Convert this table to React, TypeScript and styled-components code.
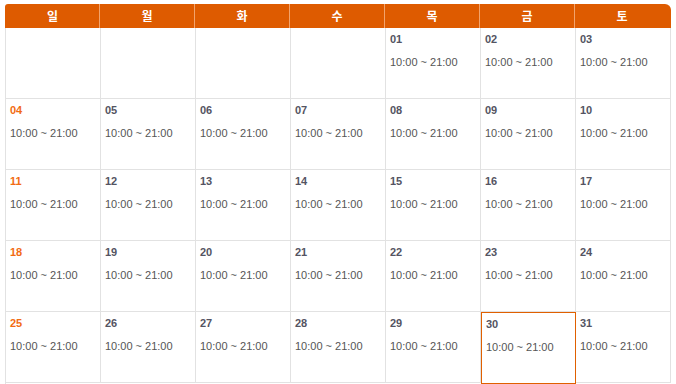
import React from "react";
import styled, { createGlobalStyle } from "styled-components";

const Global = createGlobalStyle`
  html, body { margin: 0; padding: 0; background: #fff; }
  body { font-family: "Liberation Sans", Arial, "Noto Sans CJK KR", sans-serif; }
`;

const Wrap = styled.div`
  padding: 4px 0 0 5px;
  width: 666px;
`;

const Header = styled.div`
  display: grid;
  grid-template-columns: repeat(7, 95px);
  height: 24px;
  width: 666px;
  background: #de5b00;
  border-radius: 3px 6px 0 0;
`;

const HeadCell = styled.div<{ $last?: boolean }>`
  display: flex;
  align-items: center;
  justify-content: center;
  padding-bottom: 1px;
  color: #fff;
  font-family: "Noto Sans CJK KR", "Liberation Sans", sans-serif;
  font-size: 12px;
  font-weight: 700;
  border-right: 1px solid ${(p) => (p.$last ? "transparent" : "#f2a36c")};
  &:first-child { padding-left: 1px; }
`;

const Body = styled.div`
  display: grid;
  grid-template-columns: repeat(7, 95px);
  border-left: 1px solid #e2e2e2;
  width: 665px;
`;

const Cell = styled.div<{ $active?: boolean }>`
  box-sizing: border-box;
  height: 71px;
  padding: 4px 0 0 4px;
  border-right: 1px solid ${(p) => (p.$active ? "#e06000" : "#e2e2e2")};
  border-bottom: 1px solid ${(p) => (p.$active ? "#e06000" : "#e2e2e2")};
  box-shadow: ${(p) => (p.$active ? "inset 1px 1px 0 #e06000" : "none")};
  ${(p) => (p.$active ? "padding-top: 5px; padding-left: 5px; height: 72px;" : "")}
`;

const DateNum = styled.div<{ $sun?: boolean }>`
  font-size: 11px;
  font-weight: 700;
  line-height: 14px;
  color: ${(p) => (p.$sun ? "#f26b12" : "#545462")};
`;

const Time = styled.div`
  margin-top: 9px;
  font-size: 11px;
  line-height: 14px;
  color: #555;
`;

const days = ["일", "월", "화", "수", "목", "금", "토"];

export default function App() {
  const cells: (number | null)[] = [null, null, null, null];
  for (let d = 1; d <= 31; d++) cells.push(d);
  return (
    <>
      <Global />
      <Wrap>
        <Header>
          {days.map((d, i) => (
            <HeadCell key={d} $last={i === 6}>{d}</HeadCell>
          ))}
        </Header>
        <Body>
          {cells.map((d, i) => (
            <Cell key={i} $active={d === 30}>
              {d !== null && (
                <>
                  <DateNum $sun={i % 7 === 0}>{String(d).padStart(2, "0")}</DateNum>
                  <Time>10:00 ~ 21:00</Time>
                </>
              )}
            </Cell>
          ))}
        </Body>
      </Wrap>
    </>
  );
}
